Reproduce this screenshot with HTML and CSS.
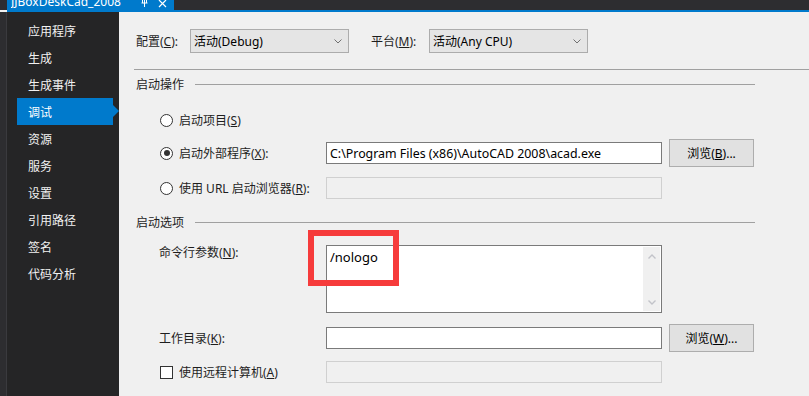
FILE: index.html
```html
<!DOCTYPE html>
<html lang="zh-CN">
<head>
<meta charset="utf-8">
<title>JJBoxDeskCad_2008</title>
<link rel="stylesheet" href="styles.css">
</head>
<body>
<div class="window">
  <div class="topbar">
    <div class="tab">
      <span class="tab-title">JJBoxDeskCad_2008</span>
      <svg class="tab-pin" width="9" height="9" viewBox="0 0 9 9"><path d="M4.5 0V5M1.5 5H7.5M4.5 5V9" stroke="#fff" stroke-width="1" fill="none"/><path d="M2.5 0V5M6.5 0V5" stroke="#fff" stroke-width="1" fill="none"/></svg>
      <svg class="tab-close" width="9" height="9" viewBox="0 0 9 9"><path d="M1 1L8 8M8 1L1 8" stroke="#fff" stroke-width="1.2" fill="none"/></svg>
    </div>
  </div>
  <div class="tabline"></div>
  <div class="main">
    <div class="strip"></div>
    <nav class="sidebar">
      <div class="nav-item">应用程序</div>
      <div class="nav-item">生成</div>
      <div class="nav-item">生成事件</div>
      <div class="nav-item active">调试</div>
      <div class="nav-item">资源</div>
      <div class="nav-item">服务</div>
      <div class="nav-item">设置</div>
      <div class="nav-item">引用路径</div>
      <div class="nav-item">签名</div>
      <div class="nav-item">代码分析</div>
    </nav>
    <div class="content">
      <div class="row-config">
        <span class="lbl lbl-config">配置(<u>C</u>):</span>
        <div class="select"><span>活动(Debug)</span><svg class="chev" width="8" height="5" viewBox="0 0 8 5"><path d="M0.5 0.5L4 4L7.5 0.5" stroke="#707070" fill="none"/></svg></div>
        <span class="lbl lbl-platform">平台(<u>M</u>):</span>
        <div class="select"><span>活动(Any CPU)</span><svg class="chev" width="8" height="5" viewBox="0 0 8 5"><path d="M0.5 0.5L4 4L7.5 0.5" stroke="#707070" fill="none"/></svg></div>
      </div>
      <div class="divider"></div>

      <div class="section section-first"><span class="section-title">启动操作</span><div class="section-line"></div></div>

      <div class="row row-r1">
        <div class="field-label"><span class="radio"></span><span>启动项目(<u>S</u>)</span></div>
      </div>
      <div class="row row-r2">
        <div class="field-label"><span class="radio checked"></span><span>启动外部程序(<u>X</u>):</span></div>
        <div class="input">C:\Program Files (x86)\AutoCAD 2008\acad.exe</div>
        <div class="button">浏览(<u>B</u>)...</div>
      </div>
      <div class="row row-r3">
        <div class="field-label"><span class="radio"></span><span>使用 URL 启动浏览器(<u>R</u>):</span></div>
        <div class="input disabled"></div>
      </div>

      <div class="section section-second"><span class="section-title">启动选项</span><div class="section-line"></div></div>

      <div class="row row-cmd">
        <div class="field-label plain top">命令行参数(<u>N</u>):</div>
        <div class="textarea">
          <span class="textarea-text">/nologo</span>
          <div class="scrollbar">
            <svg width="8" height="5" viewBox="0 0 8 5"><path d="M0.5 4.5L4 1L7.5 4.5" stroke="#c2c3c9" stroke-width="1.4" fill="none"/></svg>
            <svg width="8" height="5" viewBox="0 0 8 5"><path d="M0.5 0.5L4 4L7.5 0.5" stroke="#c2c3c9" stroke-width="1.4" fill="none"/></svg>
          </div>
        </div>
        <div class="highlight"></div>
      </div>
      <div class="row row-dir">
        <div class="field-label plain">工作目录(<u>K</u>):</div>
        <div class="input"></div>
        <div class="button">浏览(<u>W</u>)...</div>
      </div>
      <div class="row row-remote">
        <div class="field-label"><span class="checkbox"></span><span>使用远程计算机(<u>A</u>)</span></div>
        <div class="input disabled"></div>
      </div>
    </div>
  </div>
</div>
</body>
</html>
```

FILE: styles.css
```css
* { box-sizing: border-box; }
html, body { margin: 0; padding: 0; }
body {
  width: 809px;
  height: 396px;
  overflow: hidden;
  font-family: "Noto Sans", "Noto Sans CJK SC", sans-serif;
  font-size: 12px;
  color: #1e1e1e;
  background: #f0f0f0;
}
u { text-decoration: underline; text-underline-offset: 1px; }

.window { width: 809px; height: 396px; display: flex; flex-direction: column; }

.topbar {
  height: 10px;
  background: #2d2d30;
  display: flex;
  overflow: hidden;
}
.tab {
  margin-left: 7px;
  width: 167px;
  height: 10px;
  background: #007acc;
  color: #fff;
  display: flex;
  align-items: flex-end;
  overflow: hidden;
}
.tab-title {
  margin-left: 4px;
  line-height: 16px;
  font-size: 12px;
  white-space: nowrap;
  width: 129px;
  overflow: hidden;
  flex: none;
}
.tab-pin { margin-left: 0; margin-bottom: 3px; flex: none; }
.tab-close { margin-left: 9px; margin-bottom: 2px; flex: none; }

.tabline {
  height: 2px;
  margin-left: 7px;
  background: #007acc;
}

.main { flex: 1; display: flex; min-height: 0; }

.strip {
  width: 7px;
  background: #2d2d30;
  border-right: 1px solid #3a3a3e;
}
.sidebar {
  width: 112px;
  background: #252526;
  padding-top: 5px;
  display: flex;
  flex-direction: column;
}
.nav-item {
  height: 27px;
  margin-left: 10px;
  width: 96px;
  padding-left: 11px;
  display: flex;
  align-items: center;
  color: #f1f1f1;
  position: relative;
}
.nav-item.active { background: #007acc; color: #fff; }
.nav-item.active::after {
  content: "";
  position: absolute;
  right: -6px;
  top: 7px;
  border-top: 6px solid transparent;
  border-bottom: 6px solid transparent;
  border-left: 6px solid #007acc;
}

.content {
  flex: 1;
  background: #f0f0f0;
  padding-left: 17px;
  padding-top: 17px;
  display: flex;
  flex-direction: column;
}

.row-config { display: flex; align-items: center; height: 24px; }
.lbl { white-space: nowrap; }
.lbl-config { width: 54px; }
.lbl-platform { margin-left: 22px; width: 58px; }
.select {
  width: 159px;
  height: 24px;
  background: #e5e5e5;
  border: 1px solid #acacac;
  display: flex;
  align-items: center;
  justify-content: space-between;
  padding-left: 3px;
  padding-right: 6px;
  color: #000;
}
.chev { flex: none; }

.divider {
  margin-top: 16px;
  margin-left: -2px;
  height: 1px;
  background: #a0a0a0;
}

.section { display: flex; align-items: center; height: 14px; }
.section-first { margin-top: 7px; }
.section-second { margin-top: 13px; }
.section-title { white-space: nowrap; }
.section-line {
  flex: 1;
  height: 1px;
  background: #a0a0a0;
  margin-left: 11px;
  margin-right: 54px;
}

.row {
  display: flex;
  align-items: center;
  height: 28px;
  margin-left: 23px;
  position: relative;
}
.row-r1 { margin-top: 15px; }
.row-r2 { margin-top: 5px; }
.row-r3 { margin-top: 7px; }
.row-cmd { margin-top: 16px; height: 68px; align-items: flex-start; }
.row-dir { margin-top: 11px; }
.row-remote { margin-top: 6px; }

.field-label {
  width: 167px;
  flex: none;
  display: flex;
  align-items: center;
  white-space: nowrap;
}
.field-label.top { line-height: 16px; }

.radio {
  width: 13px;
  height: 13px;
  border: 1px solid #333;
  border-radius: 50%;
  background: #fff;
  margin-left: 1px;
  margin-right: 6px;
  display: flex;
  align-items: center;
  justify-content: center;
  flex: none;
}
.radio.checked::after {
  content: "";
  width: 6px;
  height: 6px;
  border-radius: 50%;
  background: #333;
}
.checkbox {
  width: 13px;
  height: 13px;
  border: 1px solid #333;
  background: #fff;
  margin-left: 1px;
  margin-right: 6px;
  flex: none;
}

.input {
  width: 336px;
  height: 22px;
  background: #fff;
  border: 1px solid #7a7a7a;
  padding-left: 3px;
  display: flex;
  align-items: center;
  color: #000;
  white-space: nowrap;
  overflow: hidden;
  font-size: 12.4px;
  flex: none;
}
.input.disabled { background: #f0f0f0; border-color: #d0d0d0; }

.button {
  margin-left: 7px;
  width: 85px;
  height: 28px;
  background: #e1e1e1;
  border: 1px solid #adadad;
  display: flex;
  align-items: center;
  justify-content: center;
  color: #000;
  flex: none;
}

.textarea {
  width: 336px;
  height: 68px;
  background: #fff;
  border: 1px solid #7a7a7a;
  display: flex;
  justify-content: space-between;
  flex: none;
}
.textarea-text {
  padding-left: 3px;
  padding-top: 3px;
  line-height: 16px;
  color: #000;
  font-size: 13px;
}
.scrollbar {
  width: 17px;
  background: #f0f0f0;
  margin: 1px 1px 1px 0;
  display: flex;
  flex-direction: column;
  justify-content: space-between;
  align-items: center;
  padding: 7px 0 6px;
}

.highlight {
  position: absolute;
  left: 149px;
  top: -15px;
  width: 91px;
  height: 56px;
  border: 6px solid #f63b3b;
}
```
